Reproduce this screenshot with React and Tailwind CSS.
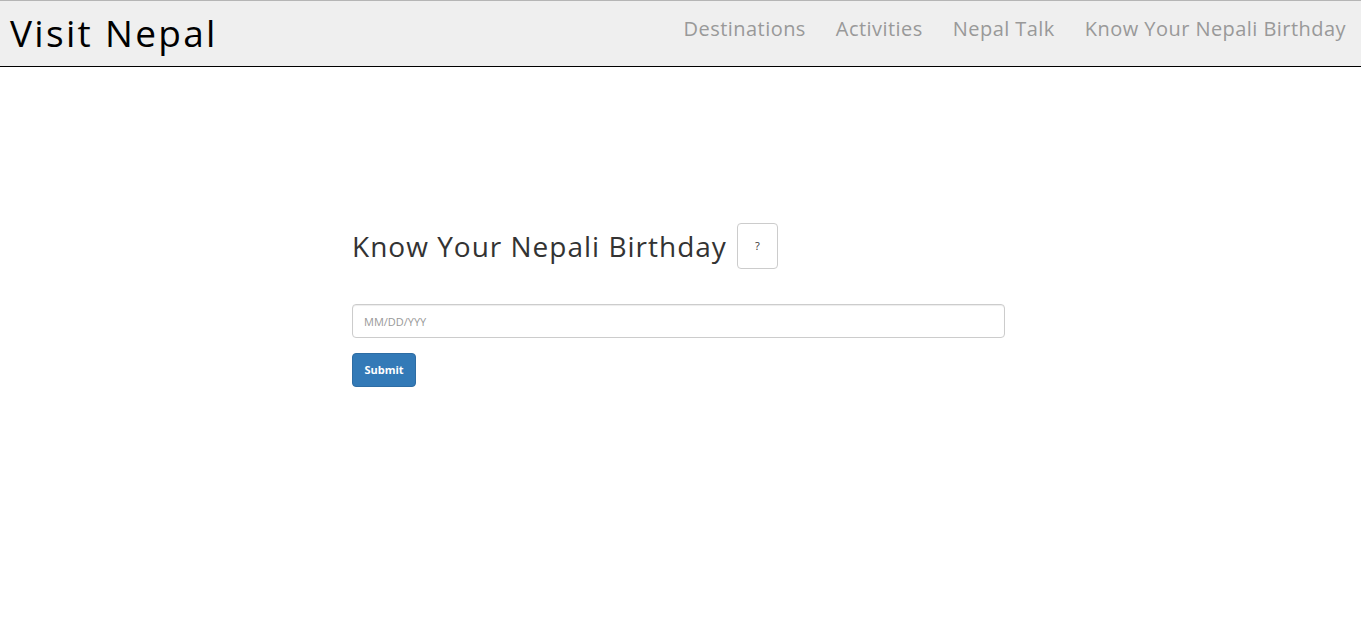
import React from 'react';

const navItems = ['Destinations', 'Activities', 'Nepal Talk', 'Know Your Nepali Birthday'];

export default function App() {
  return (
    <div className="min-h-screen bg-white font-['Open_Sans',sans-serif]">
      {/* Header */}
      <header className="flex h-[67px] items-center justify-between border-t border-b border-t-[#b5b5b5] border-b-black bg-[#efefef] pl-[10px] pr-[15px]">
        <h1 className="pb-[2px] text-[37px] leading-none tracking-[2.3px] text-black">Visit Nepal</h1>
        <nav className="flex items-center gap-[30px] pb-[10px]">
          {navItems.map((item) => (
            <a key={item} href="#" className="text-[20px] tracking-[0.45px] text-[#999999]">
              {item}
            </a>
          ))}
        </nav>
      </header>

      {/* Birthday form */}
      <main className="ml-[352px] w-[653px] pt-[156px]">
        <div className="flex items-center gap-[10px]">
          <h2 className="text-[28px] leading-none tracking-[1px] text-[#333333]">Know Your Nepali Birthday</h2>
          <button className="flex h-[46px] w-[41px] items-center justify-center rounded-[4px] border border-[#cccccc] bg-white text-[11px] text-[#333333]">
            ?
          </button>
        </div>

        <input
          type="text"
          placeholder="MM/DD/YYY"
          className="mt-[35px] block h-[34px] w-full rounded-[4px] border border-[#cccccc] px-[11px] text-[11px] text-[#555555] shadow-[inset_0_1px_1px_rgba(0,0,0,0.075)] outline-none placeholder:text-[#999999]"
        />

        <button className="mt-[15px] h-[34px] w-[64px] rounded-[4px] border border-[#2e6da4] bg-[#337ab7] text-[11px] font-bold text-white">
          Submit
        </button>
      </main>
    </div>
  );
}
